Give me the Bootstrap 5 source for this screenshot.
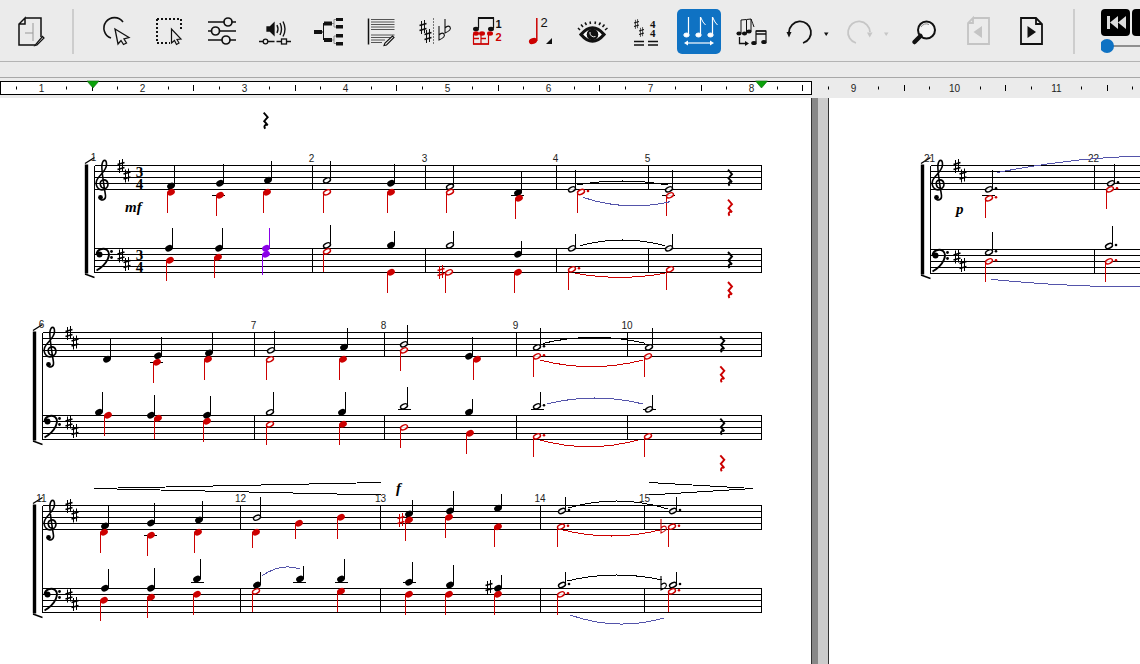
<!DOCTYPE html>
<html lang="en">
<head>
  <meta charset="UTF-8">
  <title>Score editor</title>
  <link href="https://cdn.jsdelivr.net/npm/bootstrap@5.3.2/dist/css/bootstrap.min.css" rel="stylesheet">
  <style>
    html, body { height: 100%; overflow: hidden; background: #ebebeb; }
    .editor-shell { width: 1140px; height: 664px; overflow: hidden; font-family: "Liberation Sans", Arial, sans-serif; }
    .tool-strip { height: 62px; padding-top: 9px; border-bottom: 1px solid #b4b4b4; overflow: hidden; }
    .tool-strip svg { flex: none; display: block; overflow: visible; }
    .tool-div { flex: none; width: 2px; height: 45px; background: #cdcdcd; margin: 0 20px; }
    .tool-div-end { margin: 0 26px 0 19px; }
    .tool-group { gap: 9px; }
    .tool-group-b { gap: 3px; margin-left: 7px; }
    .tool-on { background: #0f72c3; border-radius: 5px; }
    .play-box { flex: none; width: 29px; height: 27px; background: #000; border-radius: 4px; }
    .play-row { gap: 2px; width: 40px; overflow: hidden; }
    .play-group { width: 39px; flex: none; overflow: hidden; }
    .speed-bar { margin-top: 3px; }
    .blank-strip { height: 16px; border-bottom: 1px solid #a8a8a8; }
    .ruler-svg { display: block; }
    .score-area { height: 566px; background: #fff; }
    .score-area svg { display: block; flex: none; }
    .gutter-strip { flex: none; width: 18px; background: linear-gradient(to right, #333 0 1px, #888 1px 7px, #ccc 7px 17px, #333 17px 18px); }
    .t-b { font: bold 11px "Liberation Sans", sans-serif; }
    .t-n { font: 13px "Liberation Sans", sans-serif; }
    .t-m { font: bold 11px "Liberation Serif", serif; }
    .r-num { font: 10px "Liberation Sans", sans-serif; fill: #222; }
    .bar-num { font: 10px "Liberation Sans", sans-serif; fill: #222; }
    .dyn { font: italic bold 15px "Liberation Serif", serif; fill: #000; }
    .sig { font: bold 15px "Liberation Serif", serif; fill: #000; }
  </style>
</head>
<body>
<div class="editor-shell">

  <!-- toolbar -->
  <div class="tool-strip d-flex align-items-start">
    <svg class="ms-2" width="44" height="45" viewBox="8 9 44 45" fill="none" stroke="#111" stroke-width="1.5">
      <path d="M25 18H41V37M35 45H19V24L25 18V24H19"/>
      <path d="M33 23V41M25 33H33" stroke="#999" stroke-width="1"/>
      <path d="M36 44L35 45.500L37 45L44 38L42.500 36.500Z" fill="#ebebeb" stroke-width="1.200"/>
    </svg>
    <div class="tool-div"></div>

    <div class="tool-group d-flex">
      <svg width="44" height="45" viewBox="94 9 44 45" fill="none" stroke="#111" stroke-width="1.600">
        <path d="M123 22A10.500 10.500 0 1 0 111 38"/>
        <path d="M115 29L129 37.500L124 39L126.500 43L123.500 44.500L121 40.500L118 44Z" fill="#ebebeb" stroke-width="1.300"/>
      </svg>
      <svg width="44" height="45" viewBox="147 9 44 45" fill="none" stroke="#111">
        <path d="M157 19H181V28M181 19V29M157 19V43H170" stroke-width="2" stroke-dasharray="2 2"/>
        <path d="M171.500 29L171.500 43L174.500 40.500L176.500 44.500L179 43L177 39.500L181 39Z" fill="#ebebeb" stroke-width="1.200"/>
      </svg>
      <svg width="44" height="45" viewBox="200 9 44 45" fill="#ebebeb" stroke="#111" stroke-width="1.700">
        <path d="M208 22H236M208 31H236M208 40H236"/>
        <circle cx="228" cy="22" r="4"/><circle cx="215.500" cy="31" r="4"/><circle cx="226" cy="40" r="4"/>
      </svg>
      <svg width="44" height="45" viewBox="253 9 44 45" fill="none" stroke="#111" stroke-width="1.300">
        <path d="M267 27H270L274 23V35L270 31H267Z" fill="#111"/>
        <path d="M277 25Q279 29 277 33M280 23Q283 29 280 35M283 21.500Q287 29 283 36.500" stroke-width="1.400"/>
        <path d="M259 41.500H263M268 41.500H274.500M276.500 41.500H281.500M287 41.500H291"/>
        <circle cx="265.500" cy="41.500" r="2.300"/><rect x="281.500" y="39" width="5" height="5"/>
      </svg>
      <svg width="44" height="45" viewBox="306 9 44 45" fill="#111" stroke="none">
        <rect x="314" y="30" width="8" height="4"/><rect x="324" y="21.500" width="8" height="4"/><rect x="324" y="38" width="8" height="4"/>
        <rect x="336" y="18" width="7" height="3"/><rect x="336" y="25" width="7" height="3.500"/>
        <rect x="336" y="34" width="7" height="3.500"/><rect x="336" y="42" width="7" height="3.500"/>
        <path d="M322 32H323.500M323.500 23V40M323.500 23.500H324M323.500 39.500H324" stroke="#111"/>
        <path d="M336 19.500H334V27H336M336 36H334V43.500H336M332 23.500H334M332 40H334" fill="none" stroke="#888"/>
      </svg>
      <svg width="44" height="45" viewBox="359 9 44 45" fill="none" stroke="#555" stroke-width="1">
        <path d="M368.500 18.500V44.500" stroke="#111" stroke-width="1.500"/>
        <path d="M371 19.500H394.500M371 22H394.500M371 24.500H394.500M371 27H394.500M371 29.500H394.500"/>
        <path d="M371 35H394.500M371 37.500H391M371 40H385M371 42.500H382"/>
        <path d="M385 43L384 45.500L386.500 45L394 37.500L392.500 36Z" fill="#ebebeb" stroke="#111" stroke-width="1.100"/>
      </svg>
      <svg width="44" height="45" viewBox="412 9 44 45" fill="#111">
        <use href="#sharp-sym" x="423" y="27"/><use href="#sharp-sym" x="428" y="36"/>
        <path d="M433.500 18V45" stroke="#777" stroke-dasharray="2 1" fill="none"/>
        <g transform="translate(441 36)"><use href="#flat-sym"/></g>
        <g transform="translate(447 29)"><use href="#flat-sym"/></g>
      </svg>
      <svg width="44" height="45" viewBox="465 9 44 45">
        <path d="M478.500 28V18H493.500V28" fill="none" stroke="#111" stroke-width="1.200"/>
        <path d="M478 18H494" stroke="#111" stroke-width="2"/>
        <ellipse cx="476" cy="29" rx="3" ry="2.200" fill="#111"/><ellipse cx="491" cy="29" rx="3" ry="2.200" fill="#111"/>
        <g fill="#cc0000"><ellipse cx="476" cy="33.500" rx="3" ry="2.200"/><ellipse cx="482" cy="33.500" rx="3" ry="2.200"/><ellipse cx="490" cy="33.500" rx="3" ry="2.200"/></g>
        <path d="M473.500 34V44H488.500V34M481 34V44" fill="none" stroke="#cc0000" stroke-width="1.200"/>
        <path d="M473 44H489M473.500 38.500H479M481 38.500H486" stroke="#cc0000" stroke-width="1.500"/>
        <text class="t-b" x="495.500" y="28" fill="#111">1</text>
        <text class="t-b" x="495.500" y="41" fill="#cc0000">2</text>
      </svg>
      <svg width="44" height="45" viewBox="518 9 44 45">
        <path d="M536.800 18V41" stroke="#cc0000" stroke-width="1.500"/>
        <ellipse cx="533" cy="41" rx="4.200" ry="3" fill="#cc0000" transform="rotate(-20 533 41)"/>
        <text class="t-n" x="540.500" y="27" fill="#111">2</text>
        <path d="M552 38V44H546Z" fill="#111"/>
      </svg>
      <svg width="44" height="45" viewBox="571 9 44 45">
        <path d="M581 34.500Q592.500 21 604 34.500Q592.500 48 581 34.500Z" fill="#fff" stroke="#111" stroke-width="3.200"/>
        <circle cx="592.500" cy="34.500" r="5.800" fill="#111"/><path d="M590 32A4 4 0 0 0 595.500 36.500" fill="none" stroke="#ebebeb"/>
        <path d="M580 30L578 28M583 27L581 24.500M586.500 25L585 22.500M590.500 24L590 21.500M595 24L595.500 21.500M599 25L600.500 22.500M602.500 27L604.500 24.500M605 30L607.500 28" stroke="#111" stroke-width="1.500"/>
      </svg>
      <svg width="44" height="45" viewBox="624 9 44 45" fill="#111">
        <g transform="translate(636.500 24) scale(.7)"><use href="#sharp-sym"/></g>
        <g transform="translate(641.500 32) scale(.7)"><use href="#sharp-sym"/></g>
        <text class="t-m" x="650" y="28" fill="#111">4</text><text class="t-m" x="650" y="37" fill="#111">4</text>
        <path d="M634 41.500H644M634 45H644M648 41.500H658M648 45H658" stroke="#111" stroke-width="1.500"/>
      </svg>
      <svg class="tool-on" width="44" height="45" viewBox="677 9 44 45" fill="#fff" stroke="#fff">
        <path d="M688.500 34V17M700.500 34V17M712.500 34V17" stroke-width="1.200"/>
        <path d="M700.500 17Q703 23 705.500 25M712.500 17Q715 23 717.500 25" fill="none"/>
        <ellipse cx="686.500" cy="35" rx="2.700" ry="2"/><ellipse cx="698.500" cy="35" rx="2.700" ry="2"/><ellipse cx="710.500" cy="35" rx="2.700" ry="2"/>
        <path d="M687 43H711" stroke-width="1.200"/>
        <path d="M684 43L688 40.500V45.500ZM714 43L710 40.500V45.500Z" stroke="none"/>
      </svg>
    </div>

    <div class="tool-group-b d-flex">
      <svg width="44" height="45" viewBox="728 9 44 45" fill="#111" stroke="#111">
        <path d="M741 33V20M746.500 33V20M751 31V19M741 20L746.500 19.500L751 19" fill="none"/>
        <path d="M751 19Q753 24 754 27" fill="none"/>
        <ellipse cx="739" cy="33.500" rx="2.600" ry="2" stroke="none"/><ellipse cx="744.500" cy="33.500" rx="2.600" ry="2" stroke="none"/><ellipse cx="749" cy="31.500" rx="2.600" ry="2" stroke="none"/>
        <path d="M739.500 37V43.500H746" fill="none" stroke-width="1.300"/><path d="M749 43.500L745 41V46Z" stroke="none"/>
        <path d="M756 42V31H766V41M756 31H766" fill="none" stroke-width="1.200"/><path d="M756 31H766M756 34H766" stroke-width="1.500"/>
        <ellipse cx="754" cy="43" rx="2.800" ry="2.100" stroke="none"/><ellipse cx="764" cy="42" rx="2.800" ry="2.100" stroke="none"/>
      </svg>
      <svg width="60" height="45" viewBox="775 9 60 45" fill="#111">
        <path d="M789 32A11 11 0 1 1 803 43" fill="none" stroke="#111" stroke-width="1.800"/>
        <path d="M786.500 32H791.500L789 37.500Z"/><path d="M824 32.500H828.500L826.200 36Z"/>
      </svg>
      <svg width="62" height="45" viewBox="838 9 62 45" fill="#c6c6c6">
        <path d="M870 32A11 11 0 1 0 856 43" fill="none" stroke="#c6c6c6" stroke-width="1.800"/>
        <path d="M867 32.500H872.500L869.700 37.500Z"/><path d="M884 32.500H888.500L886.200 36Z"/>
      </svg>
      <svg width="49" height="45" viewBox="903 9 49 45">
        <circle cx="926.500" cy="30" r="8.500" fill="#f4f4f4" stroke="#111" stroke-width="2"/>
        <path d="M921 27A6 6 0 0 1 929 24.500" fill="none" stroke="#888"/>
        <path d="M920.500 36L914.500 42" stroke="#111" stroke-width="4.500" stroke-linecap="round"/>
      </svg>
      <svg width="52" height="45" viewBox="955 9 52 45" fill="none" stroke="#c4c4c4" stroke-width="1.800">
        <path d="M973 18H989V44H968V23L973 18V23H968"/><path d="M982 26V38L973.500 32Z" fill="#c4c4c4" stroke="none"/>
      </svg>
      <svg width="44" height="45" viewBox="1010 9 44 45" fill="none" stroke="#111" stroke-width="1.800">
        <path d="M1021 18H1036L1042 24V44H1021ZM1036 18V24H1042"/><path d="M1027.500 26V38L1036 32Z" fill="#111" stroke="none"/>
      </svg>
    </div>
    <div class="tool-div tool-div-end"></div>

    <div class="play-group d-flex flex-column">
      <div class="play-row d-flex">
        <div class="play-box">
          <svg width="29" height="27" viewBox="0 0 29 27" fill="#dcdcdc">
            <rect x="6" y="7" width="3" height="13"/><path d="M17 7V20L9 13.500ZM25 7V20L17 13.500Z"/>
          </svg>
        </div>
        <div class="play-box"></div>
      </div>
      <svg class="speed-bar" width="39" height="14" viewBox="1101 39 39 14">
        <path d="M1106 46H1140" stroke="#8f8f8f" stroke-width="2"/>
        <circle cx="1107" cy="46" r="7" fill="#0f72c3"/>
      </svg>
    </div>
  </div>

  <div class="blank-strip"></div>

  <!-- ruler -->
  <svg class="ruler-svg" id="rulerBar" width="1140" height="20" viewBox="0 78 1140 20"></svg>

  <!-- score pages -->
  <div class="score-area d-flex">
    <svg id="pageLeft" width="811" height="566" viewBox="0 98 811 566"></svg>
    <div class="gutter-strip"></div>
    <svg id="pageRight" width="311" height="566" viewBox="829 98 311 566"></svg>
  </div>
</div>

<svg width="0" height="0" class="position-absolute">
  <defs>
    <g id="sharp-sym">
      <path d="M-1.500 -6V7M1.500 -7V6" stroke="#111" stroke-width="1" fill="none"/>
      <path d="M-3.500 -1.500L3.500 -3.500M-3.500 3.500L3.500 1.500" stroke="#111" stroke-width="1.700" fill="none"/>
    </g>
    <g id="flat-sym">
      <path d="M-2 -10V4Q5 1 3 -2Q1 -4 -2 -1" stroke="#111" stroke-width="1.100" fill="none"/>
    </g>
  </defs>
</svg>

<script src="https://cdn.jsdelivr.net/npm/bootstrap@5.3.2/dist/js/bootstrap.bundle.min.js"></script>
<script>
  const BLACK = "#000", RED = "#cc0000", BLUE = "#5454aa", PURPLE = "#8a00e8";

  // ruler
  function drawRuler() {
    let s = '<rect x="0.5" y="81.500" width="811" height="13" fill="#fff" stroke="#000"/>';
    for (let k = 0; k < 45; k++) {
      const x = Math.round(15.6 + k * 25.375) + .5;
      if (k % 4 == 1) {
        s += `<text class="r-num" x="${x}" y="91.500" text-anchor="middle">${(k - 1) / 4 + 1}</text>`;
      } else {
        const h = k % 4 == 3 ? 3 : 1.5;
        s += `<path d="M${x} ${88 - h}V${88 + h}" stroke="#000"/>`;
      }
    }
    for (const x of [93, 761.500]) s += `<path d="M${x - 6} 81H${x + 6}L${x} 88Z" fill="#0aa30a" stroke="#065f06" stroke-width=".6"/>`;
    document.getElementById("rulerBar").innerHTML = s;
  }

  // note: [stemX, headY, stemEnd, kind]  kind 0 quarter, 1 half, 2 dotted half
  function noteSvg(n, color) {
    const [x, y, end, kind] = n;
    const up = end < y;
    const sx = Math.round(x) + .5;
    const cx = up ? sx - 3.5 : sx + 3.5;
    let s = `<path d="M${sx} ${y}V${end}" stroke="${color}" stroke-width="1.100" shape-rendering="crispEdges"/>`;
    if (kind) {
      s += `<ellipse cx="${cx}" cy="${y}" rx="3.700" ry="2.200" fill="#fff" fill-opacity=".85" stroke="${color}" stroke-width="1.400" transform="rotate(-25 ${cx} ${y})"/>`;
    } else {
      s += `<ellipse cx="${cx}" cy="${y}" rx="4" ry="3.100" fill="${color}" transform="rotate(-25 ${cx} ${y})"/>`;
    }
    if (kind == 2) s += `<circle cx="${cx + 7}" cy="${y - 1}" r="1.300" fill="${color}"/>`;
    return s;
  }

  const tieSvg = ([x1, y1, x2, y2, peak, color]) => {
    const cy = 2 * peak - (y1 + y2) / 2;
    return `<path d="M${x1} ${y1}Q${(x1 + x2) / 2} ${cy} ${x2} ${y2}" fill="none" stroke="${color}" stroke-width="1" shape-rendering="crispEdges"/>`;
  };
  const ledgerSvg = ([x1, x2, y]) => `<path d="M${x1} ${y}H${x2}" stroke="#000" shape-rendering="crispEdges"/>`;
  const restSvg = ([x, y], color) => `<path transform="translate(${x} ${y})" d="M-2 -8L2 -3.500L-1.500 .5L2 4.500C0 3.500 -2.500 5 -.5 8" fill="none" stroke="${color}" stroke-width="1.900"/>`;
  const sharpSvg = (x, y, color) => `<g transform="translate(${x} ${y})"><path d="M-1.500 -6V7M1.500 -7V6" stroke="${color}" stroke-width="1" fill="none"/><path d="M-3.500 -1.500L3.500 -3.500M-3.500 3.500L3.500 1.500" stroke="${color}" stroke-width="1.800" fill="none"/></g>`;
  const flatSvg = (x, y, color) => `<path transform="translate(${x} ${y})" d="M-2 -10V4Q5 1 3 -2Q1 -4 -2 -1" stroke="${color}" stroke-width="1.100" fill="none"/>`;

  function trebleClef(x, y) {
    return `<g transform="translate(${x} ${y})"><path d="M1 4.500C-3 4.500 -4.500 -2 0 -3.500C5 -4.500 7 2.500 2 5.500C-3.500 8.500 -8 3 -6.500 -2.500C-5 -8 3.500 -12 3.500 -19C3.500 -24.500 0 -24.500 -1 -19C-2 -14 2 8 2.500 12C3 17 -3 18 -3.500 14" fill="none" stroke="#000" stroke-width="1.600"/><circle cx="-2.500" cy="14" r="2.400"/></g>`;
  }
  function bassClef(x, y) {
    return `<g transform="translate(${x} ${y})"><circle cx="-5" cy="0" r="3"/><path d="M-8 0C-7.500 -5.500 -1 -7 2.500 -4.500C7 -1 3.500 9.500 -8 16" fill="none" stroke="#000" stroke-width="1.900"/><circle cx="7" cy="-3" r="1.400"/><circle cx="7" cy="3" r="1.400"/></g>`;
  }

  // one brace system: two staves, bars, clefs, key and numbers
  function systemSvg(sys) {
    const [t, b] = sys.tops;
    let s = "";
    for (const top of sys.tops) {
      for (let i = 0; i < 5; i++) s += `<path d="M${sys.left} ${top + i * 6}H${sys.right}" stroke="#000" shape-rendering="crispEdges"/>`;
      s += `<path d="M${sys.right} ${top}V${top + 24}" stroke="#000" shape-rendering="crispEdges"/>`;
      for (const x of sys.bars) s += `<path d="M${x} ${top}V${top + 24}" stroke="#000" shape-rendering="crispEdges"/>`;
    }
    const lx = sys.left;
    s += `<path d="M${lx} ${t}V${b + 24}" stroke="#000" shape-rendering="crispEdges"/>`;
    s += `<path d="M${lx - 8} ${t - 1}V${b + 25}" stroke="#000" stroke-width="3.400"/>`;
    s += `<path d="M${lx - 9.500} ${t - 2}L${lx} ${t - 8}M${lx - 9.500} ${b + 25.500}L${lx} ${b + 29}" stroke="#000" stroke-width="1.400"/>`;
    s += trebleClef(lx + 8.500, t + 18) + bassClef(lx + 10, b + 6);
    s += sharpSvg(lx + 26.500, t + 0.500, "#000") + sharpSvg(lx + 32.500, t + 10, "#000");
    s += sharpSvg(lx + 26.500, b + 7, "#000") + sharpSvg(lx + 32.500, b + 15.500, "#000");
    if (sys.sig) {
      for (const top of sys.tops) {
        s += `<text class="sig" x="${lx + 45}" y="${top + 11}" text-anchor="middle">3</text><text class="sig" x="${lx + 45}" y="${top + 23.500}" text-anchor="middle">4</text>`;
      }
    }
    for (const [num, x, y] of sys.nums) s += `<text class="bar-num" x="${x}" y="${y}" text-anchor="middle">${num}</text>`;
    for (const l of sys.ledgers) s += ledgerSvg(l);
    for (const n of sys.black) s += noteSvg(n, BLACK);
    for (const n of sys.red) s += noteSvg(n, RED);
    for (const n of sys.purple || []) s += noteSvg(n, PURPLE);
    for (const t2 of sys.ties) s += tieSvg(t2);
    for (const r of sys.rests || []) s += restSvg(r, BLACK);
    for (const r of sys.redRests || []) s += restSvg(r, RED);
    return s + (sys.extra || "");
  }

  const systems = [
    {
      tops: [165.5, 248.5], left: 94.5, right: 761.5, sig: true,
      bars: [312.5, 425.5, 556.5, 648.5],
      nums: [[1, 93.5, 161], [2, 311.5, 162], [3, 424.5, 162], [4, 555.5, 162], [5, 647.5, 162]],
      ledgers: [[212, 225, 195.5], [511, 524, 195.5], [662, 675, 195.5]],
      black: [
        [173.7, 186, 165, 0], [222.7, 183.3, 164.3, 0], [270.7, 180.3, 161, 0], [330.3, 180.3, 161, 1], [393.7, 183.3, 164.3, 0],
        [452.7, 186.7, 165.3, 1], [521.3, 192.7, 171.7, 0], [575.3, 189.3, 170, 1], [672.3, 189.3, 170, 1],
        [172.3, 248.3, 228, 0], [221.7, 248.3, 228, 0], [330.3, 245.3, 225.3, 1], [393.7, 245.3, 231.3, 0],
        [452.7, 245.3, 231, 1], [521.3, 254.3, 241, 0], [575.3, 248.3, 234, 1], [672.3, 248.3, 234, 1]
      ],
      red: [
        [166.7, 192.3, 213, 0], [215.7, 195.3, 216, 0], [263.3, 192.3, 213, 0], [323.3, 192.3, 213, 1], [386.7, 192.3, 213, 0],
        [446.3, 192, 212.7, 1], [514.7, 198.3, 218.7, 0], [577.3, 192, 212.7, 2], [665.7, 195.3, 216, 1],
        [165.7, 260.3, 281, 0], [214.3, 257.3, 278, 0], [323.3, 251.3, 272, 1], [386.7, 272.3, 292.7, 0],
        [445.3, 272.3, 292.7, 1], [514.3, 272.3, 292.7, 0], [568.3, 269.3, 289.7, 2], [665.7, 269.3, 289.7, 1]
      ],
      purple: [[269.3, 248.3, 228, 0], [262.3, 254.3, 274.7, 0]],
      ties: [
        [582.7, 197.3, 670, 201.7, 205.7, BLUE], [576.7, 185, 668, 185, 181, BLACK],
        [580, 245.7, 665, 245.7, 240, BLACK], [575, 273.3, 665, 273.3, 277.3, RED]
      ],
      rests: [[730, 177.7], [730, 260], [265.7, 120.7]],
      redRests: [[730, 207.7], [730, 290]],
      extra: `<text class="dyn" x="125" y="211.500">mf</text>` + sharpSvg(441, 272, RED)
    },
    {
      tops: [332.5, 415.5], left: 42.5, right: 761.5,
      bars: [254.5, 384.5, 516.5, 627.5],
      nums: [[6, 41.5, 328], [7, 253.5, 329], [8, 383.5, 329], [9, 515.5, 329], [10, 627, 329]],
      ledgers: [[150, 163, 362.5], [398, 411, 409.5], [531, 544, 409.5], [643, 656, 409.5]],
      black: [
        [110, 359.3, 338.7, 0], [160.7, 355.7, 337.3, 0], [211.7, 353, 332.7, 0], [273.7, 350.3, 331, 1], [346.7, 347.3, 328, 0],
        [407.3, 344.3, 325, 1], [472.3, 356.3, 337.3, 0], [539.7, 347.3, 328, 2], [651.7, 347.3, 328, 1],
        [102.3, 412.3, 392.3, 0], [153.7, 415.3, 395.3, 0], [210.3, 415.3, 396.3, 0], [272.7, 412.3, 392.3, 1], [345.3, 412.3, 392.3, 0],
        [407.3, 406.3, 387.3, 1], [472.3, 412.3, 399.3, 0], [539.7, 406.3, 392.3, 2], [651.7, 409.3, 395.3, 1]
      ],
      red: [
        [153.3, 362.3, 382.7, 0], [204.3, 359.3, 379.7, 0], [266.3, 359.3, 379.7, 1], [339.3, 359.3, 379.7, 0],
        [400.3, 350.3, 370.7, 1], [473.3, 359.3, 379.7, 0], [532.7, 356.3, 376.7, 2], [644.3, 356.3, 376.7, 1],
        [104.3, 415.3, 436, 0], [154.3, 418.3, 439.3, 0], [203.3, 421.3, 442, 0], [265.7, 424.3, 445, 1], [338.7, 424.3, 445, 0],
        [400.3, 427.3, 447.7, 1], [465.7, 433.3, 454, 0], [532.7, 436.3, 456.7, 2], [644.3, 436.3, 456.7, 1]
      ],
      ties: [
        [543.3, 343.3, 645, 343.3, 337.3, BLACK], [540, 360, 643, 360, 366.7, RED],
        [546.7, 404, 643, 404, 398, BLUE], [540, 440, 638, 440, 446.7, RED]
      ],
      rests: [[722.3, 344.3], [722.3, 426.7]],
      redRests: [[722.3, 374.3], [722.3, 463.3]]
    },
    {
      tops: [505.5, 588.5], left: 42.5, right: 761.5,
      bars: [240.5, 380.5, 540.5, 644.5],
      nums: [[11, 41.5, 501.5], [12, 240.5, 502], [13, 380.5, 502], [14, 540, 502], [15, 644.5, 502]],
      ledgers: [[144, 157, 535.5], [191, 204, 582.5], [293, 306, 582.5], [335, 348, 582.5], [403, 416, 582.5]],
      black: [
        [107.7, 526, 505.3, 0], [154.3, 523, 503, 0], [201.7, 520, 501, 0], [259.7, 517.7, 497, 1],
        [412.3, 514, 500, 0], [452.7, 511, 491, 0], [501.3, 508.3, 494, 0], [564.7, 511, 497, 2], [675.7, 511, 497, 2],
        [107.7, 588.3, 569, 0], [153.7, 588.3, 568, 0], [200.3, 579, 559, 0], [259.7, 585, 572.3, 0], [302.7, 579, 566.3, 0], [344.3, 579, 559, 0],
        [412.3, 582.3, 562.3, 0], [452.7, 585, 565, 0], [501.3, 588.3, 575, 0], [564.7, 585, 572.3, 2], [675.7, 585, 572.3, 2]
      ],
      red: [
        [100.3, 532.3, 553, 0], [147.3, 535.3, 556, 0], [194.3, 532.3, 553, 0], [252.3, 532.3, 548, 0], [295.3, 523.3, 539, 0], [337.3, 517.3, 539, 0],
        [405.3, 520, 540.7, 0], [445.3, 517.3, 537.7, 0], [494.3, 526.7, 546.7, 0], [557.3, 526.7, 546.7, 2], [668.3, 526.7, 546.7, 2],
        [100.3, 600.3, 620.7, 0], [146.7, 597.3, 617.7, 0], [193.3, 594.3, 614.7, 0], [252.3, 591.3, 612.3, 1], [337.3, 591.3, 612.3, 0],
        [405.3, 594.3, 614.7, 0], [445.3, 594.3, 614.7, 0], [494.3, 594.3, 614.7, 0], [557.3, 594.3, 614.7, 2], [668.3, 591.3, 612.3, 2]
      ],
      ties: [
        [261.7, 576, 300, 569, 567.5, BLUE], [568, 508, 668, 509, 501, BLACK], [563, 530, 660, 530, 536, RED],
        [567, 581, 662, 580, 575, BLACK], [570, 615, 664, 618, 624, BLUE]
      ],
      extra: `<path d="M381 482.500L94 488.500L381 495M649 482.500L753 488.500L649 495" fill="none" stroke="#000" stroke-width="1" shape-rendering="crispEdges"/>`
        + `<text class="dyn" x="396" y="493">f</text>`
        + sharpSvg(401, 520, RED) + flatSvg(663, 529, RED) + sharpSvg(489, 587, BLACK) + flatSvg(663, 586, BLACK)
    }
  ];

  const rightSystem = {
    tops: [165.5, 249.5], left: 930.5, right: 1140,
    bars: [1094.5],
    nums: [[21, 929.5, 162], [22, 1093.5, 162]],
    ledgers: [[982, 995, 195.5]],
    black: [
      [992.3, 189.3, 170.3, 2], [1113.7, 183.3, 164.3, 2],
      [992.3, 252.3, 232, 2], [1112.3, 246, 226, 2]
    ],
    red: [
      [985.3, 198.3, 218.3, 2], [1106.3, 189.3, 209.3, 2],
      [985.3, 261.3, 281.7, 2], [1105.3, 261.3, 281.7, 2]
    ],
    ties: [[996.7, 172.7, 1140, 156, 161.2, BLUE], [990.7, 279.3, 1140, 287, 285, BLUE]],
    extra: `<text class="dyn" x="956" y="214">p</text>`
  };

  drawRuler();
  document.getElementById("pageLeft").innerHTML = systems.map(systemSvg).join("");
  document.getElementById("pageRight").innerHTML = systemSvg(rightSystem);
</script>
</body>
</html>
